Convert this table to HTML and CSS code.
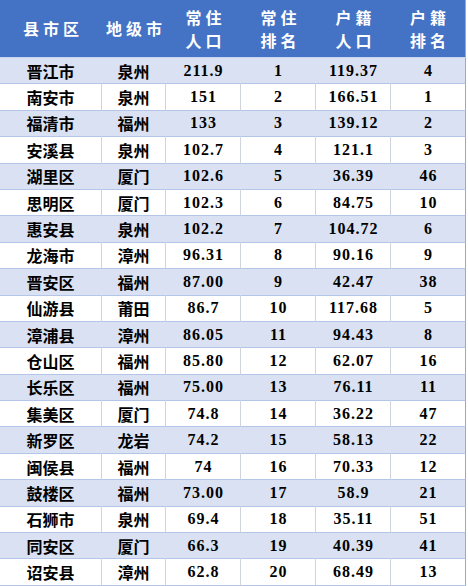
FILE: index.html
```html
<!DOCTYPE html>
<html lang="zh">
<head>
<meta charset="utf-8">
<link rel="stylesheet" href="styles.css">
</head>
<body>
<table class="rank">
  <colgroup>
    <col class="c-county"><col class="c-city"><col class="c-num"><col class="c-num"><col class="c-num"><col class="c-num">
  </colgroup>
  <thead>
    <tr>
      <th>县市区</th>
      <th>地级市</th>
      <th>常住<br>人口</th>
      <th>常住<br>排名</th>
      <th>户籍<br>人口</th>
      <th>户籍<br>排名</th>
    </tr>
  </thead>
  <tbody>
    <tr class="alt"><td class="zh">晋江市</td><td class="zh">泉州</td><td>211.9</td><td>1</td><td>119.37</td><td>4</td></tr>
    <tr><td class="zh">南安市</td><td class="zh">泉州</td><td>151</td><td>2</td><td>166.51</td><td>1</td></tr>
    <tr class="alt"><td class="zh">福清市</td><td class="zh">福州</td><td>133</td><td>3</td><td>139.12</td><td>2</td></tr>
    <tr><td class="zh">安溪县</td><td class="zh">泉州</td><td>102.7</td><td>4</td><td>121.1</td><td>3</td></tr>
    <tr class="alt"><td class="zh">湖里区</td><td class="zh">厦门</td><td>102.6</td><td>5</td><td>36.39</td><td>46</td></tr>
    <tr><td class="zh">思明区</td><td class="zh">厦门</td><td>102.3</td><td>6</td><td>84.75</td><td>10</td></tr>
    <tr class="alt"><td class="zh">惠安县</td><td class="zh">泉州</td><td>102.2</td><td>7</td><td>104.72</td><td>6</td></tr>
    <tr><td class="zh">龙海市</td><td class="zh">漳州</td><td>96.31</td><td>8</td><td>90.16</td><td>9</td></tr>
    <tr class="alt"><td class="zh">晋安区</td><td class="zh">福州</td><td>87.00</td><td>9</td><td>42.47</td><td>38</td></tr>
    <tr><td class="zh">仙游县</td><td class="zh">莆田</td><td>86.7</td><td>10</td><td>117.68</td><td>5</td></tr>
    <tr class="alt"><td class="zh">漳浦县</td><td class="zh">漳州</td><td>86.05</td><td>11</td><td>94.43</td><td>8</td></tr>
    <tr><td class="zh">仓山区</td><td class="zh">福州</td><td>85.80</td><td>12</td><td>62.07</td><td>16</td></tr>
    <tr class="alt"><td class="zh">长乐区</td><td class="zh">福州</td><td>75.00</td><td>13</td><td>76.11</td><td>11</td></tr>
    <tr><td class="zh">集美区</td><td class="zh">厦门</td><td>74.8</td><td>14</td><td>36.22</td><td>47</td></tr>
    <tr class="alt"><td class="zh">新罗区</td><td class="zh">龙岩</td><td>74.2</td><td>15</td><td>58.13</td><td>22</td></tr>
    <tr><td class="zh">闽侯县</td><td class="zh">福州</td><td>74</td><td>16</td><td>70.33</td><td>12</td></tr>
    <tr class="alt"><td class="zh">鼓楼区</td><td class="zh">福州</td><td>73.00</td><td>17</td><td>58.9</td><td>21</td></tr>
    <tr><td class="zh">石狮市</td><td class="zh">泉州</td><td>69.4</td><td>18</td><td>35.11</td><td>51</td></tr>
    <tr class="alt"><td class="zh">同安区</td><td class="zh">厦门</td><td>66.3</td><td>19</td><td>40.39</td><td>41</td></tr>
    <tr><td class="zh">诏安县</td><td class="zh">漳州</td><td>62.8</td><td>20</td><td>68.49</td><td>13</td></tr>
  </tbody>
</table>
</body>
</html>
```

FILE: styles.css
```css
html, body {
  margin: 0;
  padding: 0;
  background: #ffffff;
}

.rank {
  width: 466px;
  table-layout: fixed;
  border-collapse: separate;
  border-spacing: 0;
}

.c-county { width: 102px; }
.c-city { width: 64px; }
.c-num { width: 75px; }

.rank th {
  height: 57px;
  padding: 0 0 0 4px;
  background: #4472c4;
  color: #ffffff;
  font-family: "Noto Sans CJK SC", sans-serif;
  font-weight: bold;
  font-size: 16px;
  line-height: 23px;
  letter-spacing: 4px;
  text-align: center;
  vertical-align: middle;
  border-bottom: 1px solid #c9d5ee;
}

.rank td {
  height: 25.4px;
  padding: 0 0 0 1px;
  text-align: center;
  vertical-align: middle;
  color: #000000;
  font-family: "Liberation Serif", serif;
  font-weight: bold;
  font-size: 16px;
  letter-spacing: 1px;
  line-height: 18px;
  border-bottom: 1px solid #b4c6e7;
  border-right: 1px solid #d0d5dd;
}

.rank td.zh {
  font-family: "Noto Sans CJK SC", sans-serif;
  font-weight: bold;
  letter-spacing: 0;
  padding: 0;
}

.rank tr.alt td {
  background: #d9e1f2;
  border-right-color: #d9e1f2;
}

.rank td:last-child,
.rank tr.alt td:last-child {
  border-right: 1px solid #8eaadb;
}

.rank th:last-child {
  border-right: 1px solid #8eaadb;
}
```
